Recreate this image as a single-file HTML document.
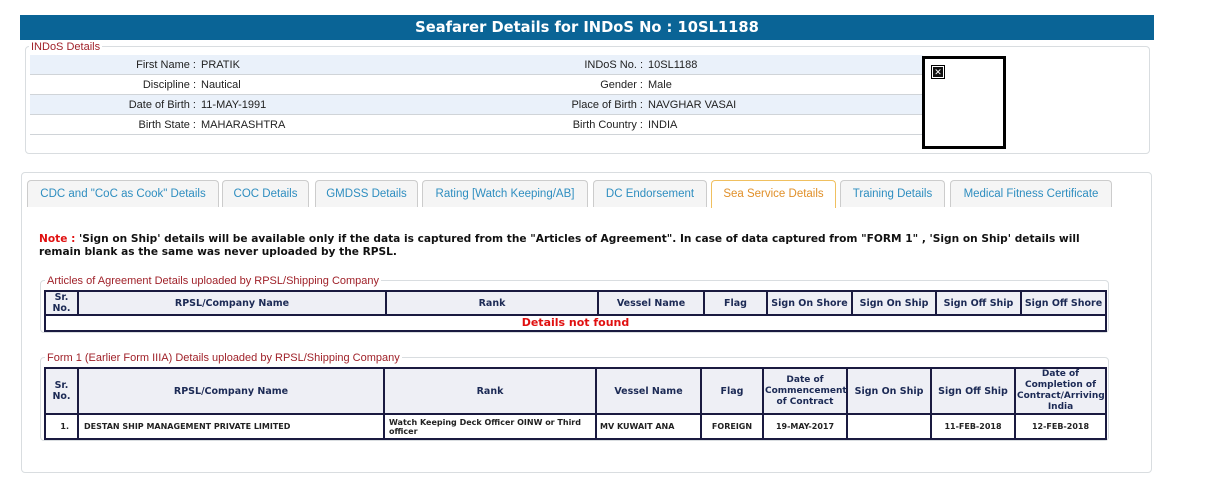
<!DOCTYPE html>
<html><head><meta charset="utf-8"><style>
*{box-sizing:border-box;margin:0;padding:0}
body{width:1231px;height:489px;background:#fff;position:relative;font-family:"Liberation Sans",Arial,sans-serif;overflow:hidden}
.a{position:absolute}
.bar{left:20px;top:15px;width:1134px;height:25px;background:#0a6496;color:#fff;font:bold 14.7px "DejaVu Sans",Verdana,sans-serif;text-align:center;line-height:25px}
.fs{border:1px solid #d9dde0;border-radius:4px}
.lg{background:#fff;color:#a0222a;font-size:11px;padding:0 2px;line-height:12px}
.row{left:30px;width:893px;height:20px;border-bottom:1px solid #d0d4d8;font-size:11px;color:#222;line-height:21px}
.row.b{background:#eaf1fa}
.row span{position:absolute}
.l{text-align:right}
.tab{top:180px;height:27px;border:1px solid #ccc;border-bottom:none;border-radius:4px 4px 0 0;background:#f5f5f5;color:#2f8ec0;font-size:11.5px;text-align:center;line-height:27px}
.tab.on{background:#fff;border-color:#f0c060;color:#e0902a;height:28px}
.note{left:39px;top:233px;font:bold 10.6px "DejaVu Sans",Verdana,sans-serif;color:#111;line-height:13px;width:1050px}
table{position:absolute;border-collapse:collapse;border:2px solid #1a1a2e;font:bold 9px "DejaVu Sans",Verdana,sans-serif;color:#222;table-layout:fixed}
td,th{border:2px solid #1a1a40;padding:0 1px;text-align:center}
th{background:#eeeff5;color:#1c2a55;font-size:9.5px;line-height:11px}
</style></head><body>
<div class="a bar">Seafarer Details for INDoS No : 10SL1188</div>
<div class="a fs" style="left:25px;top:46px;width:1125px;height:108px"></div>
<div class="a lg" style="left:29px;top:41px">INDoS Details</div>
<div class="a row b" style="top:55px"><span class="l" style="right:727px">First Name :</span><span style="left:171px">PRATIK</span><span class="l" style="right:280px">INDoS No. :</span><span style="left:618px">10SL1188</span></div>
<div class="a row" style="top:75px"><span class="l" style="right:727px">Discipline :</span><span style="left:171px">Nautical</span><span class="l" style="right:280px">Gender :</span><span style="left:618px">Male</span></div>
<div class="a row b" style="top:95px"><span class="l" style="right:727px">Date of Birth :</span><span style="left:171px">11-MAY-1991</span><span class="l" style="right:280px">Place of Birth :</span><span style="left:618px">NAVGHAR VASAI</span></div>
<div class="a row" style="top:115px"><span class="l" style="right:727px">Birth State :</span><span style="left:171px">MAHARASHTRA</span><span class="l" style="right:280px">Birth Country :</span><span style="left:618px">INDIA</span></div>
<div class="a" style="left:922px;top:56px;width:84px;height:93px;border:3px solid #000;background:#fff"></div>
<div class="a" style="left:931px;top:65px;width:14px;height:14px;border:1px solid #000;padding:1px"><div style="width:10px;height:10px;background:#111;color:#fff;font-size:9px;line-height:10px;text-align:center">✕</div></div>

<div class="a fs" style="left:21px;top:172px;width:1131px;height:301px"></div>
<div class="a tab" style="left:27px;width:192px">CDC and "CoC as Cook" Details</div>
<div class="a tab" style="left:222px;width:87px">COC Details</div>
<div class="a tab" style="left:315px;width:103px">GMDSS Details</div>
<div class="a tab" style="left:422px;width:166px">Rating [Watch Keeping/AB]</div>
<div class="a tab" style="left:593px;width:114px">DC Endorsement</div>
<div class="a tab on" style="left:711px;width:125px">Sea Service Details</div>
<div class="a tab" style="left:840px;width:105px">Training Details</div>
<div class="a tab" style="left:950px;width:162px">Medical Fitness Certificate</div>

<div class="a note"><span style="color:#e01010">Note :</span> 'Sign on Ship' details will be available only if the data is captured from the "Articles of Agreement". In case of data captured from "FORM 1" , 'Sign on Ship' details will remain blank as the same was never uploaded by the RPSL.</div>

<div class="a fs" style="left:40px;top:280px;width:1069px;height:53px"></div>
<div class="a lg" style="left:45px;top:275px">Articles of Agreement Details uploaded by RPSL/Shipping Company</div>
<table style="left:44px;top:290px;width:1061px">
<colgroup><col style="width:33px"><col style="width:308px"><col style="width:212px"><col style="width:106px"><col style="width:63px"><col style="width:85px"><col style="width:84px"><col style="width:85px"><col style="width:85px"></colgroup>
<tr style="height:24px"><th>Sr.<br>No.</th><th>RPSL/Company Name</th><th>Rank</th><th>Vessel Name</th><th>Flag</th><th>Sign On Shore</th><th>Sign On Ship</th><th>Sign Off Ship</th><th>Sign Off Shore</th></tr>
<tr style="height:16px"><td colspan="9" style="color:#e01010;font-size:11px;line-height:12px">Details not found</td></tr>
</table>

<div class="a fs" style="left:40px;top:357px;width:1069px;height:84px"></div>
<div class="a lg" style="left:45px;top:352px">Form 1 (Earlier Form IIIA) Details uploaded by RPSL/Shipping Company</div>
<table style="left:44px;top:367px;width:1061px">
<colgroup><col style="width:33px"><col style="width:306px"><col style="width:212px"><col style="width:105px"><col style="width:62px"><col style="width:84px"><col style="width:84px"><col style="width:84px"><col style="width:91px"></colgroup>
<tr style="height:46px"><th>Sr.<br>No.</th><th>RPSL/Company Name</th><th>Rank</th><th>Vessel Name</th><th>Flag</th><th style="font-size:9px">Date of Commencement of Contract</th><th>Sign On Ship</th><th>Sign Off Ship</th><th style="font-size:9px">Date of Completion of Contract/Arriving India</th></tr>
<tr style="height:25px;font-size:8px;line-height:9px"><td style="text-align:right;padding-right:8px">1.</td><td style="text-align:left;padding-left:5px">DESTAN SHIP MANAGEMENT PRIVATE LIMITED</td><td style="text-align:left;padding-left:4px">Watch Keeping Deck Officer OINW or Third officer</td><td style="text-align:left;padding-left:3px">MV KUWAIT ANA</td><td>FOREIGN</td><td>19-MAY-2017</td><td></td><td>11-FEB-2018</td><td>12-FEB-2018</td></tr>
</table>
</body></html>
